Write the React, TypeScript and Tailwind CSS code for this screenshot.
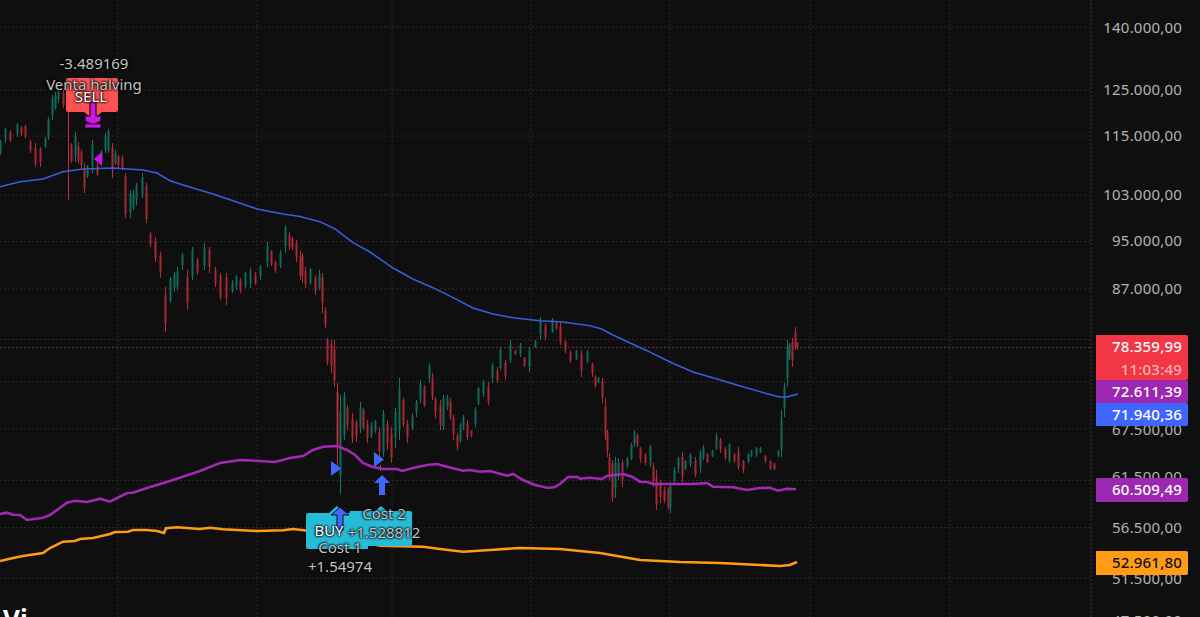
import React from 'react';

// x, high, low read off the chart
const RAW: [number, number, number][] = [
  [0,140,155],[5,128,143],[10,130,142],[17,123,137],[21,126,136],[25,125,138],[30,140,153],[35,143,167],[40,147,167],[45,137,148],[48,117,140],[52,95,120],[55,92,110],[58,90,103],[63,90,108],[71,143,163],[75,132,162],[78,142,164],[81,150,170],[84,163,193],[87,165,178],[92,140,173],[97,163,176],[101,150,165],[105,133,153],[108,129,153],[112,143,178],[115,150,165],[118,155,168],[122,155,170],[125,173,218],[130,190,218],[133,190,210],[136,183,205],[142,173,198],[146,183,223],[150,232,247],[155,237,262],[160,252,278],[165,287,332],[170,277,303],[174,272,292],[177,267,290],[182,253,270],[187,270,310],[192,247,280],[197,258,275],[204,243,270],[209,247,273],[215,267,287],[220,273,300],[226,273,305],[232,280,293],[236,275,290],[240,278,293],[245,272,288],[250,268,288],[255,272,285],[260,265,280],[267,242,267],[271,250,266],[275,260,273],[280,250,268],[285,225,253],[289,232,250],[292,237,250],[296,240,262],[300,250,280],[302,253,283],[305,267,288],[310,268,285],[315,275,295],[319,270,290],[322,273,313],[325,307,328],[327,338,365],[331,340,373],[334,340,387],[337,383,467],[340,395,494],[344,392,440],[347,405,430],[352,413,443],[356,420,442],[360,402,433],[363,408,430],[367,420,443],[371,422,438],[375,420,433],[379,427,457],[383,410,457],[387,420,450],[391,427,463],[395,408,448],[399,378,440],[403,398,427],[407,420,443],[412,413,430],[416,400,417],[420,380,403],[424,385,407],[429,363,383],[432,373,400],[435,397,418],[440,400,430],[443,395,430],[447,395,410],[450,398,420],[453,415,440],[457,433,450],[460,423,443],[463,415,430],[467,420,440],[471,430,437],[475,407,427],[478,387,405],[483,380,397],[488,382,405],[492,363,383],[497,367,383],[500,348,370],[505,360,380],[510,340,363],[515,350,355],[520,343,357],[524,357,367],[529,347,372],[535,340,348],[540,317,340],[545,323,340],[552,318,333],[556,322,330],[560,322,345],[565,340,353],[570,350,363],[576,350,360],[581,350,377],[587,350,363],[592,363,377],[595,375,388],[598,377,383],[602,378,403],[605,398,440],[607,430,457],[609,453,480],[612,460,502],[615,457,498],[618,458,480],[622,460,487],[627,457,468],[631,443,460],[634,430,447],[637,433,447],[640,447,463],[645,453,465],[650,445,467],[653,463,487],[656,470,510],[660,480,503],[664,487,503],[668,487,510],[670,482,513],[674,467,483],[678,457,473],[682,452,482],[685,460,470],[690,453,467],[695,457,477],[700,450,473],[703,445,460],[707,453,463],[712,450,457],[716,433,450],[720,438,453],[725,447,460],[729,443,463],[734,453,463],[738,447,470],[743,460,473],[748,453,463],[751,450,457],[756,447,457],[760,447,453],[765,455,463],[770,460,470],[774,463,470],[778,450,457],[781,410,457],[784,383,417],[787,340,387],[789,343,360],[792,338,367],[795,327,350],[797,342,350],
];

// up = green, checked against the previous candle; these were read as red regardless
const FORCE_RED = [30, 35, 84, 112, 146, 150, 155, 160, 165, 187, 220, 226, 300, 325, 327, 337, 379, 391, 440, 453, 457, 488, 581, 605, 607, 609, 612, 622, 656, 668, 795, 797];
const FORCE_GREEN = [0, 5, 48, 52, 130, 340, 399, 416, 478, 500, 510, 540, 631, 670, 716, 781, 784, 787];

const candles = RAW.map(([x, hi, lo], i) => {
  const mid = (hi + lo) / 2;
  const prev = i ? (RAW[i - 1][1] + RAW[i - 1][2]) / 2 : mid;
  let up = mid <= prev;
  if (FORCE_RED.includes(x)) up = false;
  if (FORCE_GREEN.includes(x)) up = true;
  const h = lo - hi;
  // body sits inside the wick, offset a little from candle to candle
  const top = hi + h * (0.08 + ((i * 7) % 5) * 0.03);
  const bot = lo - h * (0.1 + ((i * 3) % 5) * 0.04);
  return { x, hi, lo, top, bot, up };
});

const GRID_Y = [27, 90, 136, 195, 241.5, 289, 339.5, 382, 429, 480.5, 527.5, 578];
const GRID_X = [118, 257, 392, 531, 670, 810, 950];

const toPoints = (p: number[][]) => p.map((a) => a.join(',')).join(' ');

const BLUE = [[0,186.7],[20,181.7],[43,179],[63,171.7],[83,169],[113,168],[143,170],[157,173],[170,180.7],[193,188],[213,194],[233,200.7],[257,209],[283,214],[300,216.5],[320,221.7],[335,229],[353,242.7],[370,252],[393,268],[413,279],[433,287.7],[453,297.7],[473,308],[493,314],[513,317.7],[540,320.7],[563,322],[590,325.7],[601.7,329],[613,335],[628,342],[647,350.7],[670,362],[693,372],[717,379],[747,388],[767,393.7],[780,397],[787,397],[798,394]];
const PURPLE = [[0,514],[7,512.7],[13,514.7],[20,515],[27,520],[43,517.7],[50,515],[67,502.7],[75,500.7],[87,502],[100,498.7],[110,501.7],[127,493],[133,492.7],[147,488],[157,485],[173,480],[200,471],[220,463],[240,460],[260,461],[275,462],[290,458],[303,456],[313,450],[323,446.7],[337,446],[347,450],[355,455],[363,463],[372,466.7],[383,469],[397,469],[402,471],[413,468],[427,465],[437,464],[447,466.7],[463,470.7],[470,470],[480,471.7],[490,471],[507,475.7],[513,474],[523,480],[535,485],[548,488],[555,487],[560,484],[568,477],[577,476.7],[580,478.7],[590,477.7],[602,479],[607,476],[623,474],[632,476.7],[640,481.7],[647,482],[653,484],[670,484],[693,484],[707,483],[713,486.7],[733,487.3],[747,490],[760,488],[770,487.7],[778,490.7],[787,488.7],[796,489.3]];
const ORANGE = [[0,561],[13,558],[23,556],[43,553],[50,548],[63,541.7],[75,541],[80,539],[93,538],[110,534],[115,532],[128,531.7],[133,530],[147,530],[157,531],[164,533],[166,528.3],[177,527.3],[200,529],[210,527.7],[223,529.3],[257,531],[283,530.3],[293,529],[306,530.5],[340,537],[380,545.7],[423,546.7],[440,549],[463,551.7],[490,550],[520,548],[560,549],[600,553],[640,560],[680,562],[720,563],[760,565],[780,566],[790,565],[797,562]];

const AXIS = [
  { y: 27, t: '140.000,00' },
  { y: 89, t: '125.000,00' },
  { y: 135, t: '115.000,00' },
  { y: 194, t: '103.000,00' },
  { y: 240, t: '95.000,00' },
  { y: 288, t: '87.000,00' },
  { y: 339, t: '78.500,00' },
  { y: 429, t: '67.500,00' },
  { y: 476, t: '61.500,00' },
  { y: 527, t: '56.500,00' },
  { y: 578, t: '51.500,00' },
  { y: 620, t: '47.500,00' },
];

const HALO = '[text-shadow:0_0_2px_#000,0_0_2px_#000,0_0_3px_#000]';

function ChartDrawing() {
  return (
    <svg width="1090" height="617" className="block">
      {GRID_Y.map((y) => (
        <line key={y} x1="0" x2="1090" y1={y} y2={y} stroke="#2a2a2a" strokeDasharray="2 2" />
      ))}
      {GRID_X.map((x) => (
        <line key={x} x1={x} x2={x} y1="0" y2="617" stroke="#2a2a2a" strokeDasharray="2 2" />
      ))}
      <line x1="0" x2="1090" y1="347.5" y2="347.5" stroke="#7d2a33" strokeDasharray="2 2" />

      {candles.map((c) => (
        <g key={c.x}>
          <rect x={c.x} y={c.hi} width="1" height={c.lo - c.hi} fill={c.up ? '#0d7b69' : '#b42d39'} />
          <rect x={c.x - 0.5} y={c.top} width="2" height={c.bot - c.top} fill={c.up ? '#0f6b5c' : '#a52a35'} />
        </g>
      ))}
      {/* long wicks */}
      <rect x="68" y="112" width="1" height="88" fill="#c22f3c" />
      <rect x="337" y="383" width="1" height="84" fill="#c22f3c" />
      <rect x="380" y="465" width="1" height="6" fill="#e0323f" />

      <polyline points={toPoints(BLUE)} fill="none" stroke="#3560e0" strokeWidth="1.5" />
      <polyline points={toPoints(PURPLE)} fill="none" stroke="#a428b5" strokeWidth="2.6" />
      <polyline points={toPoints(ORANGE)} fill="none" stroke="#ff9c14" strokeWidth="2.6" />

      {/* SELL marker */}
      <path d="M68 78h48a2 2 0 0 1 2 2v30a2 2 0 0 1-2 2H102l-9 7-9-7H68a2 2 0 0 1-2-2V80a2 2 0 0 1 2-2z" fill="#ff5252" />
      <path d="M90 102h6v14h5v5l-8 4-8-4v-5h5z" fill="#d014e8" stroke="#0f0f0f" strokeWidth="1.2" />
      <rect x="85" y="124" width="16" height="4" fill="#d014e8" stroke="#0f0f0f" strokeWidth="0.8" />
      <path d="M102 152v14l-8-7z" fill="#d60ff0" />

      {/* BUY markers */}
      <path d="M306 515a2 2 0 0 1 2-2h21l8-7 8 7h23v36h-60a2 2 0 0 1-2-2z" fill="#26bcd7" />
      <path d="M350 511h25l6-5 6 5h23a2 2 0 0 1 2 2v31a2 2 0 0 1-2 2h-60z" fill="#26bcd7" />
      <path d="M331 461l10 7.5-10 7.5z" fill="#3f68ff" />
      <path d="M374 452l10 7.5-10 7.5z" fill="#3f68ff" />
      <path d="M379 495v-12h-5l8-8 8 8h-5v12z" fill="#3f68ff" />
      <path d="M337 530v-15h-6l9-8 9 8h-6v15z" fill="#3f68ff" stroke="#0f0f0f" strokeWidth="1" />
    </svg>
  );
}

function ChartText({ x, y, children, color = 'text-[#c4c4c4]' }: { x: number; y: number; children: React.ReactNode; color?: string }) {
  return (
    <div
      className={`absolute -translate-x-1/2 -translate-y-1/2 whitespace-nowrap text-[15px] leading-none ${color} ${HALO}`}
      style={{ left: x, top: y }}
    >
      {children}
    </div>
  );
}

function PriceTag({ top, h, bg, text = 'text-white', children }: { top: number; h: number; bg: string; text?: string; children: React.ReactNode }) {
  return (
    <div
      className={`absolute left-[4px] w-[92px] rounded-r-[2px] pr-[6px] text-right text-[15px] leading-[23px] tracking-[0.2px] font-medium ${bg} ${text}`}
      style={{ top, height: h }}
    >
      {children}
    </div>
  );
}

export default function App() {
  return (
    <div className="relative flex h-[617px] w-[1200px] overflow-hidden bg-[#0f0f0f] font-['Noto_Sans',sans-serif]">
      <div className="relative w-[1090px] shrink-0">
        <ChartDrawing />

        <ChartText x={94} y={63}>-3.489169</ChartText>
        <ChartText x={94} y={84}>Venta halving</ChartText>
        <ChartText x={91} y={96} color="text-white">SELL</ChartText>

        <ChartText x={329} y={530} color="text-white">BUY</ChartText>
        <ChartText x={340} y={547}>Cost 1</ChartText>
        <ChartText x={340} y={566}>+1.54974</ChartText>
        <ChartText x={384} y={513}>Cost 2</ChartText>
        <ChartText x={384} y={532}>+1.528812</ChartText>

        <div className="absolute bottom-[-17px] left-[3px] text-[26px] leading-[30px] font-bold text-white">Vi</div>
      </div>

      <div className="relative flex-1 border-l-2 border-dotted border-[#262626]">
        {AXIS.map((a) => (
          <div
            key={a.t}
            className="absolute right-[18px] -translate-y-1/2 text-[15px] leading-none tracking-[0.2px] text-[#b4b4b4]"
            style={{ top: a.y }}
          >
            {a.t}
          </div>
        ))}

        <PriceTag top={335} h={45} bg="bg-[#f23645]">
          <div>78.359,99</div>
          <div className="text-[#ffb3b8]">11:03:49</div>
        </PriceTag>
        <PriceTag top={380} h={23} bg="bg-[#9c27b0]">72.611,39</PriceTag>
        <PriceTag top={403} h={23} bg="bg-[#3f65ff]">71.940,36</PriceTag>
        <PriceTag top={478} h={24} bg="bg-[#9c27b0]">60.509,49</PriceTag>
        <PriceTag top={551} h={24} bg="bg-[#ff9c14]" text="text-[#111]">52.961,80</PriceTag>
      </div>
    </div>
  );
}
